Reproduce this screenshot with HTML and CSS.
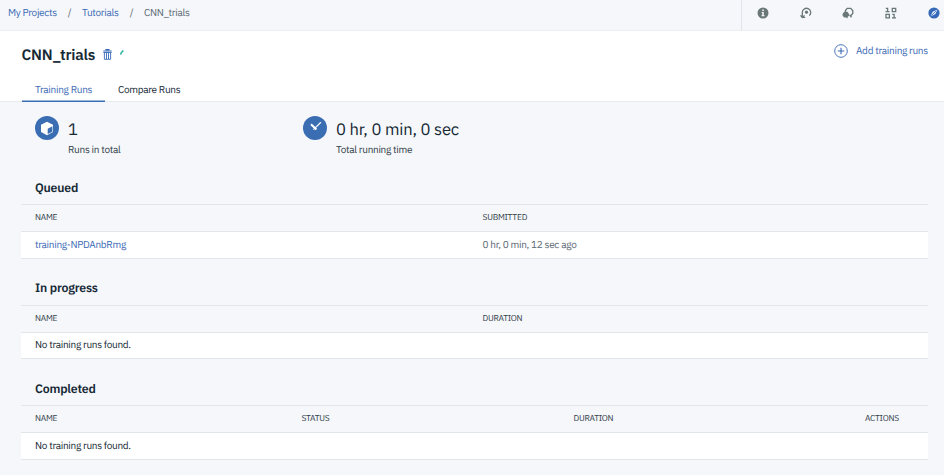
FILE: index.html
```html
<!DOCTYPE html>
<html lang="en">
<head>
<meta charset="utf-8">
<title>CNN_trials</title>
<link rel="stylesheet" href="styles.css">
</head>
<body>
<header class="topbar">
  <nav class="crumbs"><a class="c-projects" href="#">My Projects</a><span class="slash">/</span><a class="c-tutorials" href="#">Tutorials</a><span class="slash">/</span><span class="c-current">CNN_trials</span></nav>
  <div class="tools">
    <svg width="12" height="12" viewBox="0 0 12 12"><circle cx="6" cy="6" r="5.5" fill="#697777"/><path d="M5.3 2.5h1.5v1.4H5.3zM4.7 4.9h2v3.3h.8v1H4.5v-1h.8V5.9h-.6z" fill="#fff"/></svg>
    <svg width="12" height="12" viewBox="0 0 12 12" fill="none" stroke="#697777" stroke-width="1.3"><path d="M2.3 10.3V5.5a4.2 4.2 0 1 1 7 3.1M.5 8.4l1.8 2.2 2.2-2.2M3 10.4h2.2"/><circle cx="6.5" cy="5.2" r="1.6" fill="#697777" stroke="none"/></svg>
    <svg width="12" height="12" viewBox="0 0 12 12" fill="none" stroke="#697777" stroke-width="1.3"><path d="M3.4 5V3.6L5.2 1.4h3.6l2 2.3v2.7L8.8 8.5H7.4M8.2 8.5l1.3 1.8"/><path d="M2.4 4.7h3l1.6 2.2v1.8L5.5 10l.4 1.5-1.8-1H2.3L.6 8.7V6.8z" fill="#697777" stroke="none"/></svg>
    <svg width="12" height="12" viewBox="0 0 12 12" fill="none" stroke="#697777" stroke-width="1.3"><path d="M.8 1.3h1.8V5M.5 4.7h4M7.3 1.3h3.4v3.4H7.3zM1 7.4h3.4v3.4H1zM7.3 7.4h1.8V11M7 10.8h4"/></svg>
    <svg width="12" height="12" viewBox="0 0 12 12"><circle cx="6" cy="6" r="5.6" fill="#3569b7"/><path d="M9.5 2.5L7.4 7.1 2.5 9.5l2.2-4.7z" fill="#e9f0fb"/><path d="M3.3 8.7l5-5" stroke="#3569b7" stroke-width=".8"/></svg>
  </div>
</header>
<section class="hero">
  <div class="title-row">
    <h1>CNN_trials</h1>
    <svg class="trash" width="9" height="11" viewBox="0 0 9 11" fill="none" stroke="#3569b7"><path d="M3 1.3V.6h3v.7M.3 2h8.4" stroke-width="1.1"/><path d="M.4 3.5h8.2M1.4 3.5v6.8h6.2V3.5M3.5 4v6M5.5 4v6" stroke-width=".9"/></svg>
    <svg class="spin" width="4" height="5" viewBox="0 0 4 5"><path d="M.6 4.6Q1.1 2 3.4.5" fill="none" stroke="#29b6a2" stroke-width="1.5"/></svg>
    <a class="add" href="#"><svg width="14" height="14" viewBox="0 0 14 14" fill="none" stroke="#3b6ab5" stroke-width=".9"><circle cx="7" cy="7" r="6.3"/><path d="M7 3.8v6.4M3.8 7h6.4" stroke-width="1.1"/></svg><span>Add training runs</span></a>
  </div>
  <div class="tabs"><a class="tab active" href="#">Training Runs</a><a class="tab" href="#">Compare Runs</a></div>
</section>
<main>
  <div class="stats">
    <div class="stat first">
      <svg width="24" height="24" viewBox="0 0 24 24"><circle cx="12" cy="12" r="12" fill="#3b6db3"/><path d="M12 5.8l6 2.9v7.4l-6 3.1-6-3.1V8.7z" fill="#fff"/><path d="M12.7 12.7l4.7-2.4v5.4l-4.7 2.4z" fill="#3b6db3"/></svg>
      <div><div class="value">1</div><div class="label">Runs in total</div></div>
    </div>
    <div class="stat">
      <svg width="24" height="24" viewBox="0 0 24 24" fill="none" stroke="#fff"><circle cx="12" cy="12" r="12" fill="#3b6db3" stroke="none"/><path d="M8 8.3l5.4 5.2" stroke-width="2"/><path d="M17.9 6.2l-7.5 7.4" stroke-width="1.2"/></svg>
      <div><div class="value">0 hr, 0 min, 0 sec</div><div class="label">Total running time</div></div>
    </div>
  </div>
  <section class="group">
    <h2>Queued</h2>
    <div class="row head two"><span>NAME</span><span>SUBMITTED</span></div>
    <div class="row body two"><a href="#">training-NPDAnbRmg</a><span class="ago">0 hr, 0 min, 12 sec ago</span></div>
  </section>
  <section class="group">
    <h2>In progress</h2>
    <div class="row head two"><span>NAME</span><span>DURATION</span></div>
    <div class="row body"><span>No training runs found.</span></div>
  </section>
  <section class="group">
    <h2>Completed</h2>
    <div class="row head four"><span>NAME</span><span>STATUS</span><span>DURATION</span><span>ACTIONS</span></div>
    <div class="row body"><span>No training runs found.</span></div>
  </section>
</main>
</body>
</html>
```
FILE: styles.css
```css
* { box-sizing: border-box; }
body { margin: 0; height: 475px; overflow: hidden; background: #f5f7fb; color: #152935; font: 10px/14px "IBM Plex Sans", Roboto, sans-serif; letter-spacing: -0.29px; text-rendering: geometricPrecision; white-space: nowrap; }
a { color: #3b6ab5; text-decoration: none; }
svg { display: block; flex: none; }
.topbar { display: flex; justify-content: space-between; height: 31px; border-bottom: 1px solid #ebeff2; }
.crumbs { display: flex; padding: 6px 0 0 8px; color: #5a6872; }
.slash { width: 25px; text-align: center; color: #5a6872; }
.c-projects { width: 49px; }
.c-tutorials { width: 37px; }
.tools { display: flex; gap: 30.7px; width: 203px; padding: 7px 0 0 15px; border-left: 1px solid #dfe5ea; }
.hero { height: 71px; padding-left: 21.5px; background: #fff; }
.title-row { display: flex; height: 47px; padding-right: 16px; }
h1 { width: 74px; margin: 14px 0 0; font-size: 15.2px; line-height: 20px; font-weight: 600; letter-spacing: -0.2px; }
.trash { margin: 18px 0 0 7.5px; }
.spin { margin: 19px 0 0 8px; }
.add { display: flex; gap: 8px; margin: 12.5px 0 0 auto; }
.add span { width: 72px; }
.tabs { display: flex; height: 24px; margin-left: -21.5px; padding-left: 21.5px; border-bottom: 1px solid #e6ebee; }
.tab { height: 24px; padding: 5px 13.5px 0; color: #152935; }
.tab.active { width: 83px; color: #3b6ab5; border-bottom: 1px solid #3b6db3; box-shadow: inset 0 -0.5px #3b6db3; }
main { padding: 0 16px 0 21px; }
.stats { display: flex; height: 75px; padding: 13.5px 0 0 14px; }
.stat { display: flex; gap: 9px; }
.stat.first { width: 268px; }
.value { height: 27px; padding-top: 2px; font-size: 16.6px; line-height: 22px; letter-spacing: -0.18px; }
.label { color: #324048; }
.group { height: 100.5px; }
h2 { height: 27px; margin: 0; padding: 0.8px 14px 0; font-size: 12.3px; line-height: 20px; font-weight: 600; letter-spacing: -0.2px; }
.row { display: grid; grid-template-columns: 1fr; align-items: center; height: 27px; padding: 0 14px; border-top: 1px solid #e0e6ea; }
.two { grid-template-columns: 447.5px 1fr; }
.four { grid-template-columns: 266.5px 272px 291.5px 1fr; }
.head { font-size: 8.5px; letter-spacing: -0.28px; color: #324048; }
.body { height: 27.5px; background: #fff; border-bottom: 1px solid #e0e6ea; }
.ago { color: #5a6872; }
```
